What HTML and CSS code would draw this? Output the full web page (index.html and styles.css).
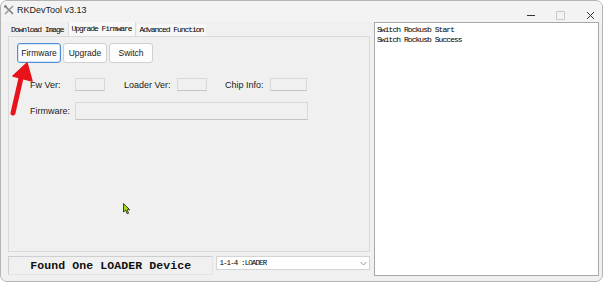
FILE: index.html
```html
<!DOCTYPE html>
<html>
<head>
<meta charset="utf-8">
<link rel="stylesheet" href="styles.css">
</head>
<body>
<div class="window">
  <div class="titlebar">
    <svg class="appicon" width="10" height="10" viewBox="0 0 10 10">
      <path d="M1 1 L9 9" stroke="#7a7a7a" stroke-width="1.6"/>
      <path d="M9 1 L1 9" stroke="#9a9a9a" stroke-width="1.6"/>
      <path d="M0.5 0.5 L3 0.5 L0.5 3 Z" fill="#555"/>
    </svg>
    <span class="title">RKDevTool v3.13</span>
    <div class="controls">
      <span class="ctl min"></span>
      <span class="ctl max"></span>
      <svg class="ctl close" width="9" height="9" viewBox="0 0 9 9"><path d="M1 1 L8 8 M8 1 L1 8" stroke="#333" stroke-width="1"/></svg>
    </div>
  </div>
  <div class="content">
    <div class="leftcol">
      <div class="tabs">
        <span class="tab">Download Image</span>
        <span class="tab active">Upgrade Firmware</span>
        <span class="tab light">Advanced Function</span>
      </div>
      <div class="panel">
        <div class="btnrow">
          <button class="btn focus">Firmware</button>
          <button class="btn">Upgrade</button>
          <button class="btn">Switch</button>
        </div>
        <div class="inforow">
          <span class="lbl w45">Fw Ver:</span><span class="field w30"></span>
          <span class="lbl w53 ml19">Loader Ver:</span><span class="field w30"></span>
          <span class="lbl w45 ml18">Chip Info:</span><span class="field w36"></span>
        </div>
        <div class="fwrow">
          <span class="lbl w45">Firmware:</span><span class="field big"></span>
        </div>
      </div>
      <div class="statusrow">
        <div class="status">Found One LOADER Device</div>
        <div class="combo"><span class="combotext">1-1-4&nbsp;:LOADER</span>
          <svg width="7" height="5" viewBox="0 0 7 5"><path d="M0.5 1 L3.5 4 L6.5 1" fill="none" stroke="#888" stroke-width="0.9"/></svg>
        </div>
      </div>
    </div>
    <div class="log">
      <div class="logline">Switch Rockusb Start</div>
      <div class="logline">Switch Rockusb Success</div>
    </div>
  </div>
  <svg class="arrow" width="40" height="60" viewBox="0 0 40 60">
    <path d="M12 113 L20 78" transform="translate(0,-60)" stroke="#e8141b" stroke-width="5" stroke-linecap="round"/>
    <path d="M26 63 L12 76 L31 81 Z" transform="translate(0,-60)" fill="#e8141b" stroke="#e8141b" stroke-width="1.5" stroke-linejoin="round"/>
  </svg>
  <svg class="cursor" width="9" height="12" viewBox="0 0 9 12">
    <path d="M0.5 0.5 L0.5 9 L2.5 7.2 L4.2 10.8 L5.6 10.2 L4 6.8 L6.8 6.8 Z" fill="#a6d81e" stroke="#1a1a1a" stroke-width="0.8" stroke-linejoin="round"/>
  </svg>
</div>
</body>
</html>
```
FILE: styles.css
```css
html, body {
  margin: 0;
  padding: 0;
  background: #ffffff;
}
body {
  width: 605px;
  height: 284px;
  overflow: hidden;
  font-family: "Liberation Sans", Arial, sans-serif;
}
.window {
  position: relative;
  width: 601px;
  height: 280px;
  border: 1px solid #b4b4b4;
  border-radius: 7px;
  background: #f0f0f0;
  overflow: hidden;
}
.titlebar {
  height: 21px;
  display: flex;
  align-items: center;
  position: relative;
  background: #f3f3f3;
}
.appicon {
  margin-left: 3px;
  margin-top: -4px;
}
.title {
  margin-left: 3px;
  margin-top: -4px;
  font-size: 9px;
  color: #1a1a1a;
}
.controls {
  margin-left: auto;
  display: flex;
  align-items: center;
  margin-top: 8px;
  margin-right: 7px;
}
.ctl { display: block; }
.min {
  width: 8px;
  height: 1px;
  background: #333;
  margin-right: 21px;
}
.max {
  width: 7px;
  height: 7px;
  border: 1px solid #c8c8c8;
  border-radius: 1px;
  margin-right: 21px;
}
.content {
  display: flex;
  padding-left: 7px;
  gap: 4px;
}
.leftcol {
  width: 362px;
  display: flex;
  flex-direction: column;
}
.tabs {
  display: flex;
  height: 13px;
  margin-top: 1px;
  align-items: flex-end;
  font-family: "Liberation Mono", monospace;
  font-size: 8px;
  letter-spacing: -1.05px;
  color: #000;
}
.tab {
  height: 12px;
  line-height: 12px;
  padding: 0 3px 0 3px;
  margin-right: 1px;
}
.tab.active {
  height: 14px;
  line-height: 13px;
  background: #f8f8f8;
  border: 1px solid #dcdcdc;
  border-bottom: none;
  padding: 0 3px;
}
.tab.light {
  background: #f7f7f7;
}
.panel {
  height: 208px;
  border: 1px solid #dadada;
  background: #f0f0f0;
  padding: 6px 0 0 8px;
  box-sizing: content-box;
}
.btnrow {
  display: flex;
  gap: 2px;
}
.btn {
  width: 44px;
  height: 20px;
  padding: 0;
  margin: 0;
  border: 1px solid #d0d0d0;
  border-radius: 3px;
  background: #fdfdfd;
  font-family: "Liberation Sans", Arial, sans-serif;
  font-size: 8.5px;
  color: #1a1a1a;
}
.btn.focus {
  border-color: #4f8fd6;
  box-shadow: inset 0 0 0 1px #d6e6f7;
}
.inforow, .fwrow {
  display: flex;
  align-items: center;
  margin-left: 13px;
}
.inforow {
  margin-top: 15px;
  height: 13px;
}
.fwrow {
  margin-top: 11px;
  height: 18px;
}
.lbl {
  font-size: 9px;
  color: #1a1a1a;
}
.w45 { width: 45px; }
.w53 { width: 53px; }
.ml19 { margin-left: 19px; }
.ml18 { margin-left: 18px; }
.field {
  display: block;
  height: 11px;
  border: 1px solid #d8d8d8;
  border-bottom-color: #c4c4c4;
  background: #f0f0f0;
  box-sizing: content-box;
}
.w30 { width: 28px; }
.w36 { width: 35px; }
.field.big {
  width: 231px;
  height: 16px;
}
.statusrow {
  display: flex;
  margin-top: 4px;
  gap: 3px;
  align-items: flex-start;
}
.status {
  width: 204px;
  height: 17px;
  border: 1px solid #cfcfcf;
  border-right-color: #e4e4e4;
  border-bottom-color: #e4e4e4;
  font-family: "Liberation Mono", "Courier New", monospace;
  font-weight: bold;
  font-size: 11.5px;
  line-height: 18px;
  text-align: center;
  color: #111;
  letter-spacing: 0.1px;
}
.combo {
  height: 12px;
  width: 148px;
  border: 1px solid #d4d4d4;
  background: #ffffff;
  display: flex;
  align-items: center;
  justify-content: space-between;
  padding: 0 2px 0 2px;
  box-sizing: content-box;
}
.combotext {
  font-family: "Liberation Mono", monospace;
  font-size: 7.5px;
  letter-spacing: -0.9px;
  color: #000;
}
.log {
  width: 225px;
  height: 254px;
  background: #ffffff;
  border: 1px solid #a8a8a8;
  padding: 2px 0 0 2px;
  box-sizing: border-box;
  font-family: "Liberation Mono", monospace;
  font-size: 8px;
  letter-spacing: -0.95px;
  color: #000;
}
.logline {
  height: 10px;
  line-height: 10px;
}
.arrow {
  position: absolute;
  left: 0;
  top: 59px;
}
.cursor {
  position: absolute;
  left: 122px;
  top: 202px;
}
```
